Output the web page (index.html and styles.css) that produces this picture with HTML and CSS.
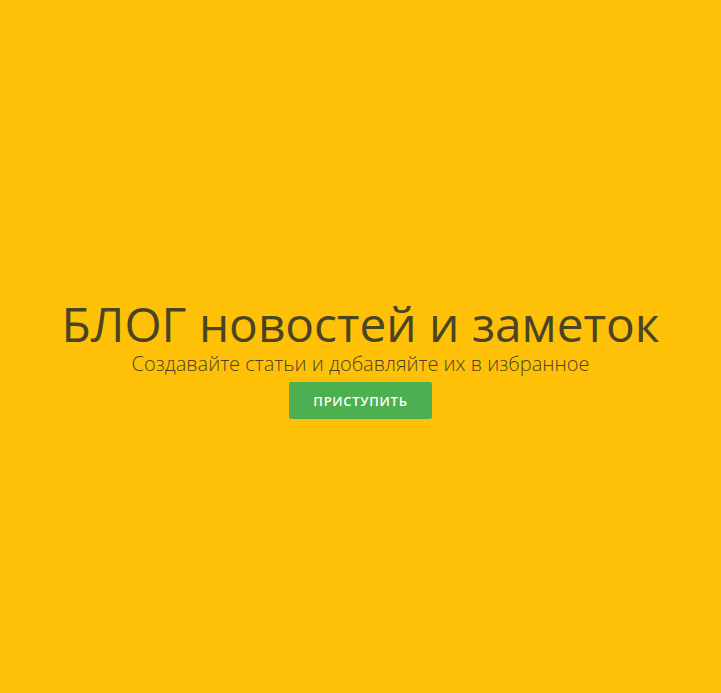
FILE: index.html
```html
<!DOCTYPE html>
<html lang="ru">
<head>
<meta charset="utf-8">
<link rel="stylesheet" href="styles.css">
</head>
<body>
<main class="hero">
  <div class="hero-inner">
    <h1 class="title">БЛОГ новостей и заметок</h1>
    <p class="subtitle">Создавайте статьи и добавляйте их в избранное</p>
    <a class="btn" href="#">ПРИСТУПИТЬ</a>
  </div>
</main>
</body>
</html>
```
FILE: styles.css
```css
html, body {
  margin: 0;
  padding: 0;
  height: 100%;
}
body {
  background: #FFC107;
  font-family: "Open Sans", "Noto Sans", sans-serif;
  color: #4a4425;
}
.hero {
  height: 100%;
  display: flex;
  align-items: center;
  justify-content: center;
}
.hero-inner {
  display: flex;
  flex-direction: column;
  align-items: center;
  padding-top: 22px;
}
.title {
  margin: 0;
  font-size: 47.8px;
  font-weight: 400;
  line-height: 56px;
}
.subtitle {
  margin: 0;
  font-size: 20px;
  font-weight: 300;
  line-height: 24px;
}
.btn {
  margin-top: 6px;
  display: flex;
  align-items: center;
  justify-content: center;
  width: 143px;
  height: 37px;
  background: #4CAF50;
  border-radius: 2px;
  color: #fff;
  font-size: 13px;
  font-weight: 600;
  letter-spacing: 0.7px;
  text-decoration: none;
}
```
